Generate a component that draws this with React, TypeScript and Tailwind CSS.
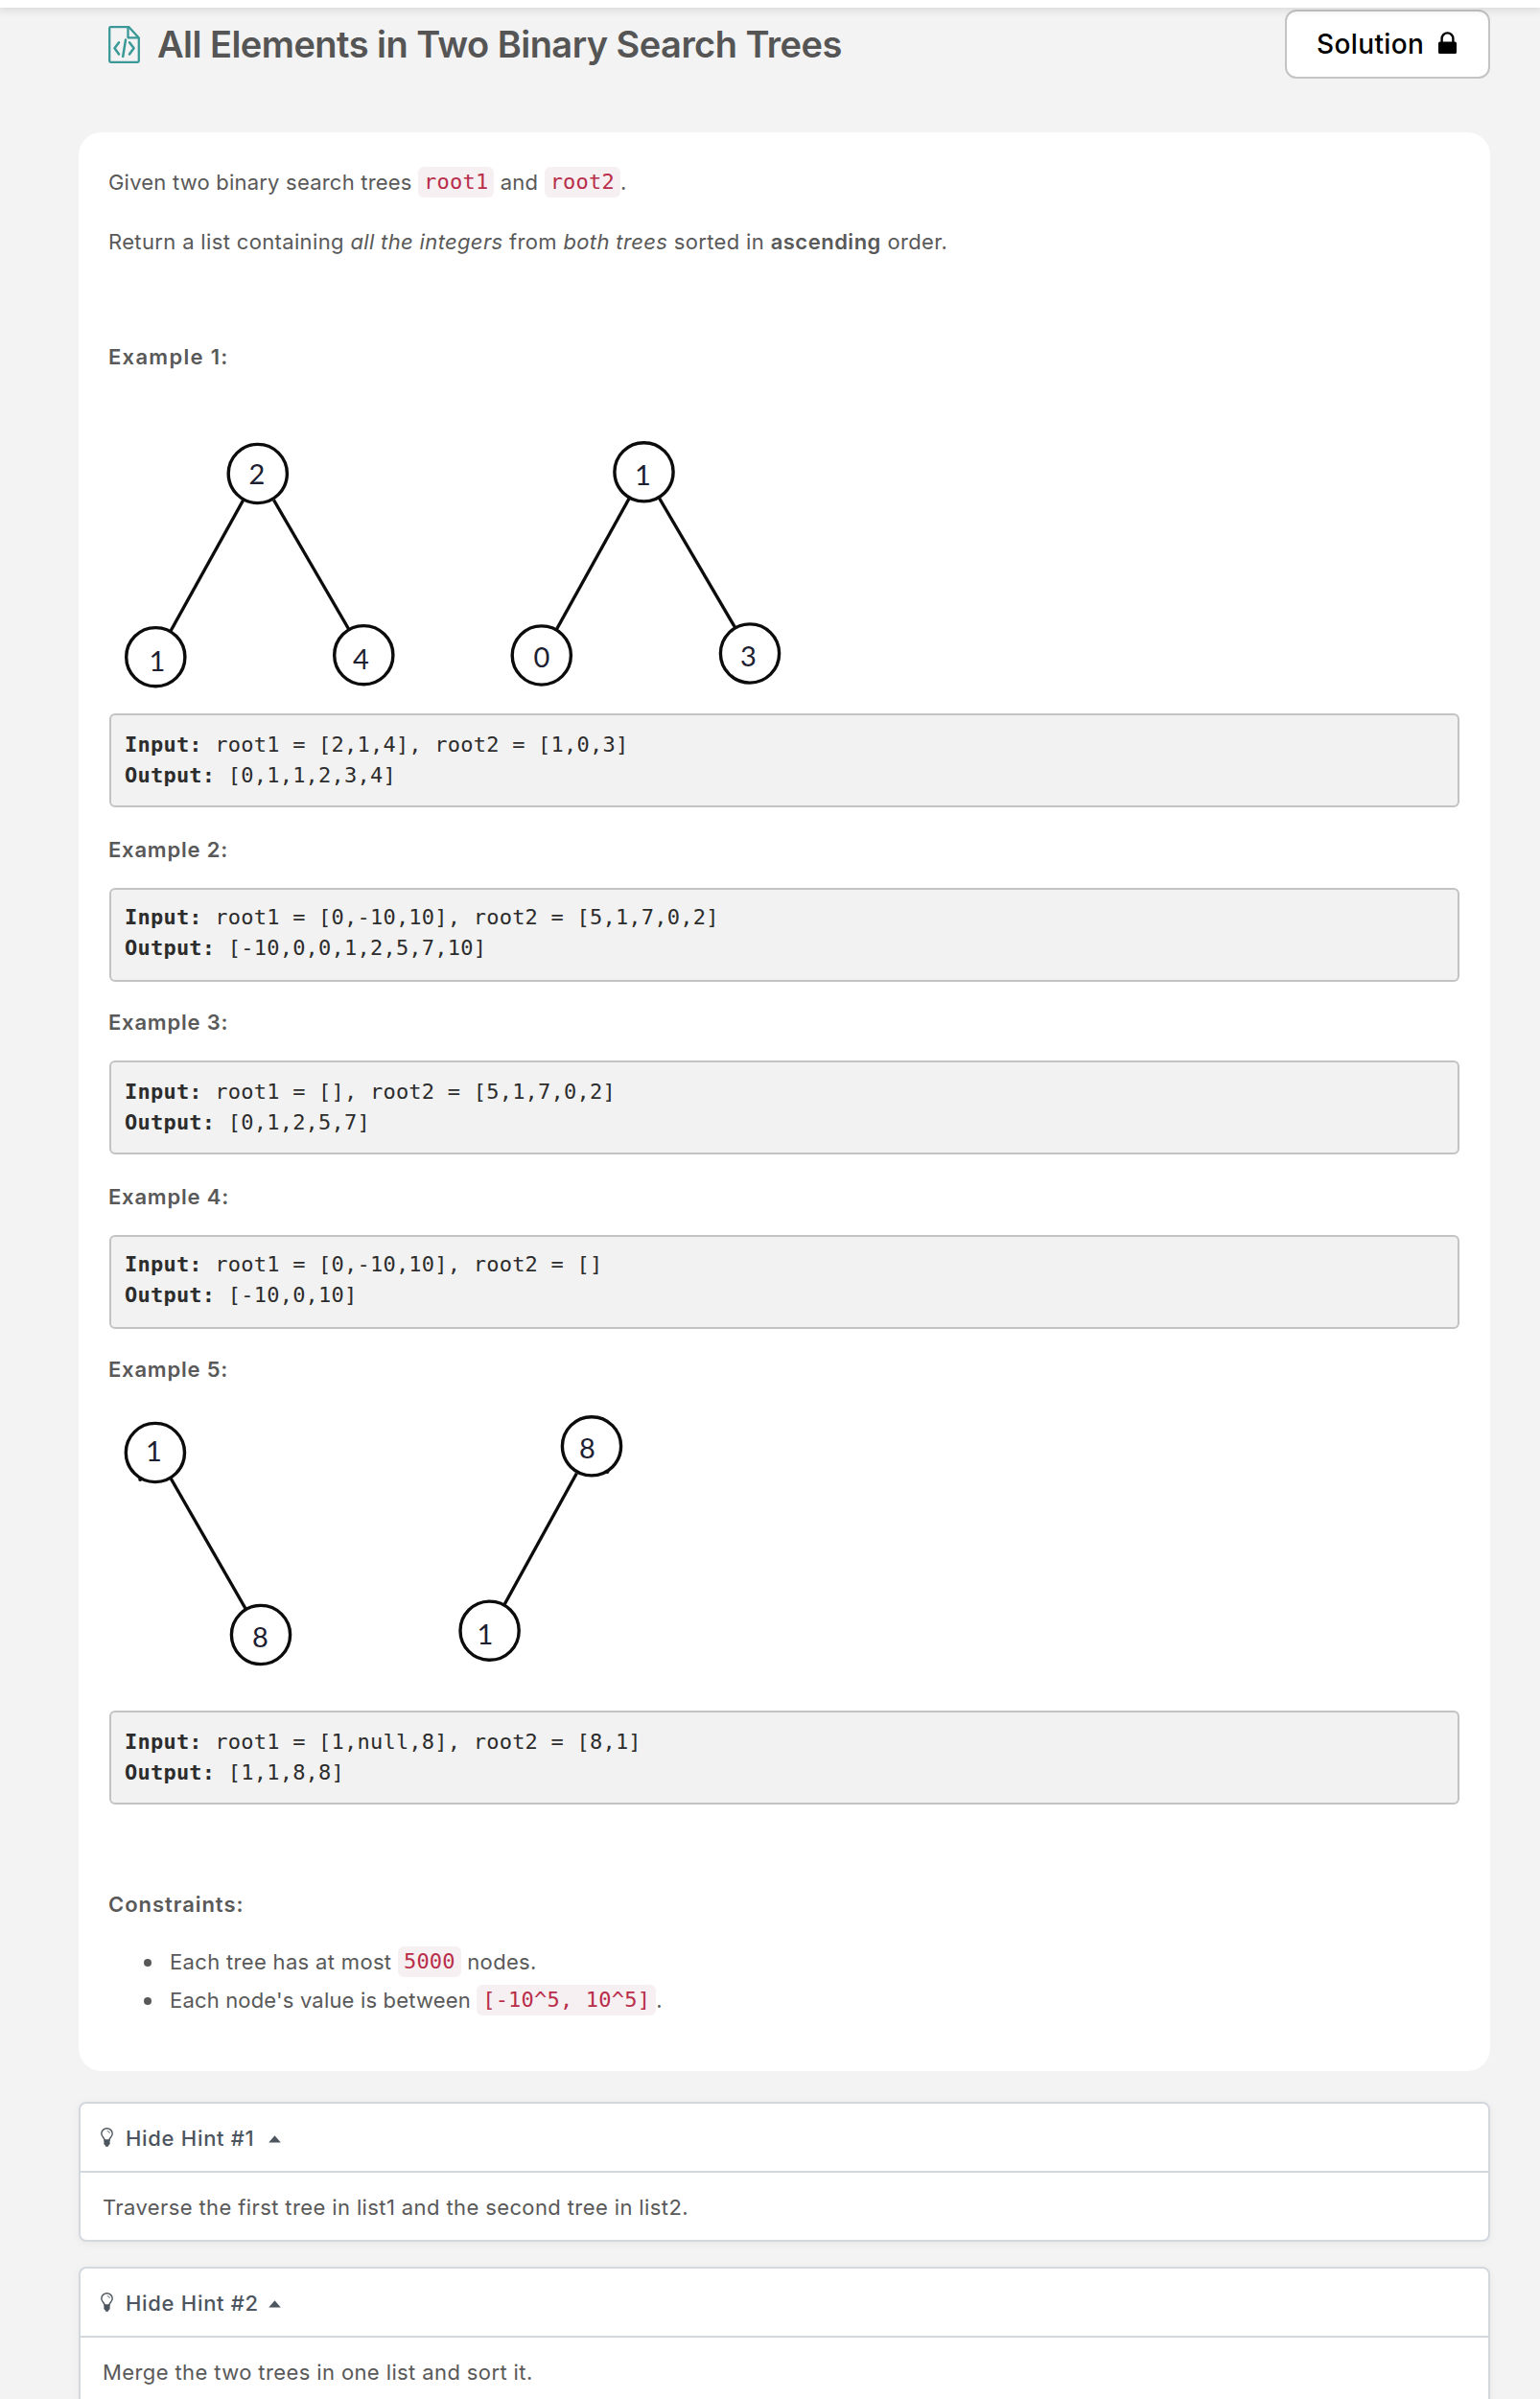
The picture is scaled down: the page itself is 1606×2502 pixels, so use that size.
import React from "react";

type TreeNode = { cx: number; cy: number; label: string; tx: number; ty: number };
type Edge = [number, number, number, number];

function Tree({ viewBox, className, nodes, edges, children }: {
  viewBox: string;
  className: string;
  nodes: TreeNode[];
  edges: Edge[];
  children?: React.ReactNode;
}) {
  return (
    <svg viewBox={viewBox} className={className} fill="none" stroke="#0c0c0c" strokeWidth="3.4">
      {edges.map(([x1, y1, x2, y2], i) => (
        <line key={i} x1={x1} y1={y1} x2={x2} y2={y2} />
      ))}
      {nodes.map((n, i) => (
        <g key={i}>
          <circle cx={n.cx} cy={n.cy} r="30.6" />
          <text x={n.tx} y={n.ty} textAnchor="middle" stroke="none" fill="#1c2030" className="font-['Lato',sans-serif] text-[29px]">
            {n.label}
          </text>
        </g>
      ))}
      {children}
    </svg>
  );
}

const firstNodes: TreeNode[] = [
  { cx: 268.8, cy: 494, label: "2", tx: 268, ty: 505 },
  { cx: 162.3, cy: 685.2, label: "1", tx: 164, ty: 699.5 },
  { cx: 379.3, cy: 683.2, label: "4", tx: 376.5, ty: 697.5 },
  { cx: 671.5, cy: 492.3, label: "1", tx: 670.5, ty: 506 },
  { cx: 564.8, cy: 683.5, label: "0", tx: 565, ty: 696 },
  { cx: 782, cy: 681.5, label: "3", tx: 780.5, ty: 694.5 },
];
const firstEdges: Edge[] = [
  [254, 521, 178, 658],
  [285.5, 521.5, 363.6, 656],
  [656.3, 519.5, 580.5, 656.3],
  [687.5, 519.5, 766.6, 654.5],
];
const fifthNodes: TreeNode[] = [
  { cx: 161.9, cy: 1515, label: "1", tx: 160.5, ty: 1524 },
  { cx: 272, cy: 1705, label: "8", tx: 271.5, ty: 1717.5 },
  { cx: 617, cy: 1508.3, label: "8", tx: 612.6, ty: 1520.5 },
  { cx: 510.6, cy: 1700.7, label: "1", tx: 506, ty: 1715 },
];
const fifthEdges: Edge[] = [
  [178.2, 1542, 256.8, 1679],
  [601.4, 1536.5, 526, 1673.5],
];

function Heading({ children, className }: { children: React.ReactNode; className: string }) {
  return <p className={`-ml-px h-10 font-semibold ${className}`}>{children}</p>;
}

function Sample({ input, output, className }: { input: string; output: string; className: string }) {
  return (
    <pre className={`h-[98px] rounded-md border-2 border-[#c3c3c3] bg-[#f2f2f2] px-[14px] font-['DejaVu_Sans_Mono',monospace] text-[22px] leading-8 tracking-[0.225px] text-[#2c2c2c] ${className}`}>
      <b>Input:</b> {input}
      {"\n"}
      <b>Output:</b> {output}
    </pre>
  );
}

function Code({ children }: { children: React.ReactNode }) {
  return (
    <code className="relative -top-px rounded-md bg-[#f6f0f2] px-1.5 pt-[3px] pb-1 font-['DejaVu_Sans_Mono',monospace] text-[22px] leading-none tracking-[0.215px] text-[#b92d49]">
      {children}
    </code>
  );
}

function Bulb() {
  return (
    <svg viewBox="0 0 13 20" className="h-5 w-[13px]" fill="none" stroke="#4d555e" strokeWidth="1.4">
      <path d="M4.2 13.2C4 10.6.8 9.6.8 6.2a5.7 5.4 0 0 1 11.4 0c0 3.4-3.2 4.4-3.4 7z" />
      <path d="M6.8 3.6c1.4 0 2.4.9 2.5 2.1" strokeWidth="1" />
      <path d="M3.4 12.6h6.2v4.6l-1.2 1-.6 1.5H5.2l-.6-1.5-1.2-1z" fill="#4d555e" stroke="none" />
    </svg>
  );
}

function Hint({ n, text, className }: { n: number; text: string; className: string }) {
  return (
    <section className={`rounded-lg border-2 border-[#d3d8df] bg-white shadow-[0_2px_10px_rgba(0,0,0,0.05)] ${className}`}>
      <div className="flex h-[72px] items-center border-b-2 border-[#d3d8df] pl-[21px] text-[#4d555e]">
        <Bulb />
        <span className="ml-[13px] h-[70px] w-[149px] font-medium leading-[72px] tracking-[0.7px]">Hide Hint #{n}</span>
        <svg viewBox="0 0 13 8" className="mt-1 h-2 w-[13px]" fill="#4d555e">
          <path d="M6.5.3 12.8 7.6H.2z" />
        </svg>
      </div>
      <p className="h-[70px] pl-[23px] leading-[72px] tracking-[0.39px]">{text}</p>
    </section>
  );
}

export default function App() {
  return (
    <div className="h-[2502px] w-[1606px] overflow-hidden bg-[#f3f3f3] font-['Inter',sans-serif] text-[22px] leading-10 tracking-[0.2px] text-[#595959]">
      <div className="relative z-10 h-2 bg-white shadow-[0_0_10px_2px_rgba(0,0,0,0.12)]" />
      <header className="flex h-[130px] items-start justify-between pr-[52px] pl-[113px]">
        <div className="flex items-start pt-[14px]">
          <svg viewBox="0 0 33 39" className="mt-[5px] mr-[18px] h-[39px] w-[33px]" fill="none" stroke="#3a9997" strokeWidth="2.3" strokeLinejoin="round">
            <path d="M1.2 2.4Q1.2 1.2 2.4 1.2H21.5L31.8 12.5V36.6Q31.8 37.8 30.6 37.8H2.4Q1.2 37.8 1.2 36.6Z" />
            <path d="M20.5 1.2V12.3H31.8" />
            <path d="M11 17.2 6.5 23.3 11 29.6M22 17.2 26.6 23.3 22 29.6M18 14.6 15.2 32" strokeWidth="2.5" strokeLinecap="round" />
          </svg>
          <h1 className="text-[38px] font-semibold leading-[48px] tracking-[-0.54px] text-[#555555]">
            All Elements in Two Binary Search Trees
          </h1>
        </div>
        <button className="mt-0.5 flex h-[72px] w-[214px] items-start rounded-xl border-2 border-[#c4c4c4] bg-white pt-[14px] pl-[31px] text-[28px] font-medium leading-10 tracking-[0.37px] text-black">
          Solution
          <svg viewBox="0 0 19 23" className="mt-[7px] ml-[15px] h-[23px] w-[19px]">
            <rect x="0" y="10.6" width="19" height="12.4" rx="1.6" fill="#000" />
            <path d="M3.6 11.5V7.4a5.9 6 0 0 1 11.8 0v4.1" fill="none" stroke="#000" strokeWidth="2.4" />
          </svg>
        </button>
      </header>

      <main className="ml-[82px] w-[1472px]">
        <article className="h-[2022px] rounded-3xl bg-white px-8 pt-8">
          <p className="-ml-px h-10 tracking-[0.21px]">
            Given two binary search trees <Code>root1</Code> and <Code>root2</Code>.
          </p>
          <p className="-ml-px mt-[22px] tracking-[0.35px]">
            Return a list containing <em>all the integers</em> from <em>both trees</em> sorted in{" "}
            <b className="font-semibold tracking-[0.5px]">ascending</b> order.
          </p>

          <Heading className="mt-20 tracking-[1.3px]">Example 1:</Heading>
          <Tree viewBox="114 393 720 351" className="mt-px block h-[351px] w-[720px]" nodes={firstNodes} edges={firstEdges} />
          <Sample className="pt-[15px]" input="root1 = [2,1,4], root2 = [1,0,3]" output="[0,1,1,2,3,4]" />

          <Heading className="mt-6 tracking-[0.8px]">Example 2:</Heading>
          <Sample className="mt-5 pt-[13px]" input="root1 = [0,-10,10], root2 = [5,1,7,0,2]" output="[-10,0,0,1,2,5,7,10]" />

          <Heading className="mt-[22px] tracking-[0.8px]">Example 3:</Heading>
          <Sample className="mt-5 pt-[15px]" input="root1 = [], root2 = [5,1,7,0,2]" output="[0,1,2,5,7]" />

          <Heading className="mt-6 tracking-[0.8px]">Example 4:</Heading>
          <Sample className="mt-5 pt-[13px]" input="root1 = [0,-10,10], root2 = []" output="[-10,0,10]" />

          <Heading className="mt-[22px] tracking-[0.8px]">Example 5:</Heading>
          <Tree viewBox="114 1448 720 336" className="block h-[336px] w-[720px]" nodes={fifthNodes} edges={fifthEdges}>
            <circle cx="146.2" cy="1543" r="2" fill="#0c0c0c" stroke="none" />
            <circle cx="633.4" cy="1535" r="2" fill="#0c0c0c" stroke="none" />
          </Tree>
          <Sample className="pt-[15px]" input="root1 = [1,null,8], root2 = [8,1]" output="[1,1,8,8]" />

          <Heading className="mt-[84px] tracking-[0.95px]">Constraints:</Heading>
          <ul className="mt-5 ml-9">
            <li className="flex h-10 items-center">
              <span className="mr-[19px] mt-0.5 size-2 rounded-full bg-[#595959]" />
              <span className="h-10 tracking-[0.33px]">
                Each tree has at most <Code>5000</Code> nodes.
              </span>
            </li>
            <li className="flex h-10 items-center">
              <span className="mr-[19px] mt-0.5 size-2 rounded-full bg-[#595959]" />
              <span className="h-10 tracking-[0.17px]">
                Each node's value is between <Code>[-10^5, 10^5]</Code>.
              </span>
            </li>
          </ul>
        </article>

        <Hint className="mt-8" n={1} text="Traverse the first tree in list1 and the second tree in list2." />
        <Hint className="mt-[26px]" n={2} text="Merge the two trees in one list and sort it." />
      </main>
    </div>
  );
}
